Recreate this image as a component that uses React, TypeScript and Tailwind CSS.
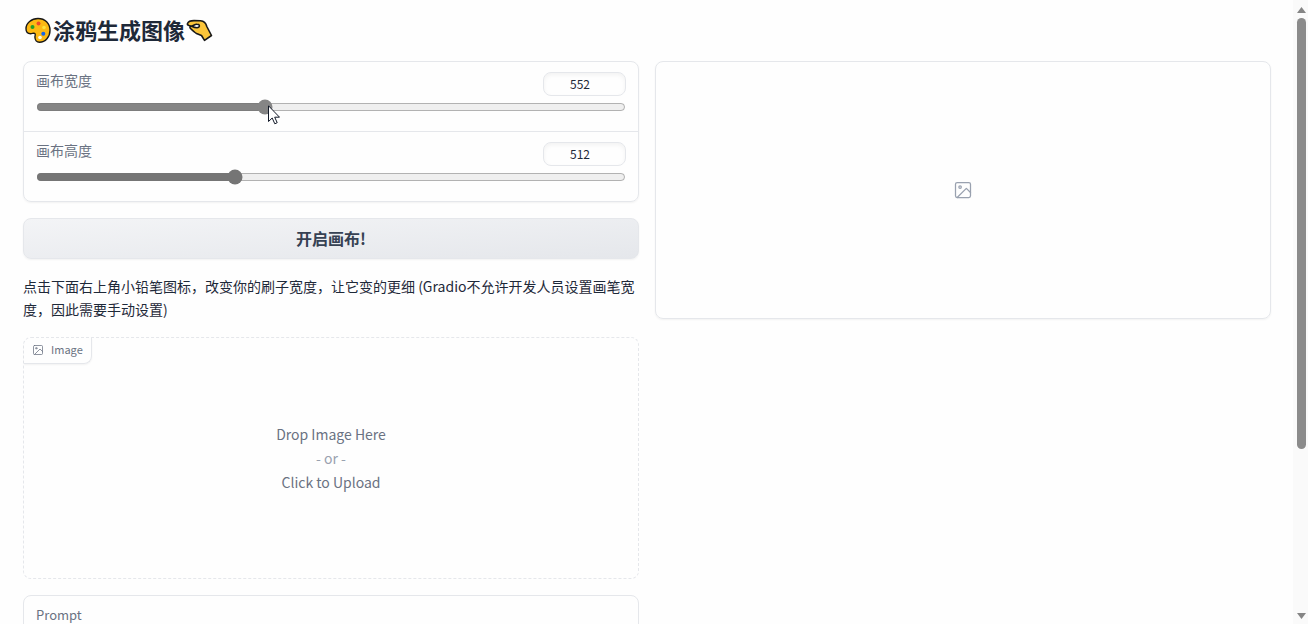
import React, { useState } from 'react'

const MIN_SIZE = 256
const MAX_SIZE = 1024

function PaletteIcon() {
  return (
    <svg className="h-7 w-7 shrink-0" viewBox="0 0 28 28" aria-hidden="true">
      <path
        d="M14 2.500C7.500 2.500 2 7.100 2 12.700c0 3.400 2.200 5 4.600 5 1.700 0 2.700-.8 4-.3 1.500.6.300 2.100.300 3.600 0 2.900 1.800 5.300 4.600 5.300 5.900 0 10.500-5.300 10.500-12C26 7.300 21 2.500 14 2.500Z"
        fill="#fdb913"
        stroke="#181818"
        strokeWidth="1.400"
      />
      <circle cx="14.500" cy="7.500" r="2" fill="#ee4b2b" />
      <circle cx="8.500" cy="11" r="2" fill="#23a026" />
      <circle cx="20" cy="11.500" r="1.800" fill="#fde23c" />
      <circle cx="19.300" cy="17.800" r="2" fill="#1764e8" />
      <circle cx="16" cy="21.500" r="1.800" fill="#fffbe8" />
    </svg>
  )
}

function PinchIcon() {
  return (
    <svg className="h-7 w-7 shrink-0" viewBox="0 0 28 28" aria-hidden="true">
      <path
        d="M1.500 7.500C2.500 5 5 4.600 8 4.600L14.500 4.700C18 5 20 7.300 20.800 10.500L25.500 19.500 18.500 24.300 15.500 19.500 10.500 17.500C8.500 16.500 6.500 14.500 4.300 12.300 3.500 11.300 4 10.400 5.500 10.300L3 9.600C1.800 9.200 1.200 8.400 1.500 7.500Z"
        fill="#fbc53a"
        stroke="#181818"
        strokeWidth="1.600"
        strokeLinejoin="round"
      />
      <path d="M5.500 10.200C7.500 10 8.500 8 11 8.200 13.500 8.200 14 9.800 12.800 11.200 11.500 12.200 8.500 11.500 5.500 10.200Z" fill="#fefefe" stroke="#181818" strokeWidth="1.500" strokeLinejoin="round" />
    </svg>
  )
}

function ImageIcon({ className }: { className: string }) {
  return (
    <svg className={className} viewBox="0 0 24 24" fill="none" stroke="currentColor" strokeWidth="1.500" strokeLinecap="round" strokeLinejoin="round" aria-hidden="true">
      <rect x="3" y="3" width="18" height="18" rx="2" />
      <circle cx="8.500" cy="8.500" r="1.500" />
      <path d="m21 15-5-5L5 21" />
    </svg>
  )
}

function Pointer() {
  return (
    <svg className="pointer-events-none absolute top-11 left-[245px] h-5 w-3" viewBox="0 0 12 20" aria-hidden="true">
      <path d="M.5.8V16.500L4.200 13 6.800 18.800 9.200 17.700 6.700 12.200H11.500Z" fill="#fff" stroke="#111827" strokeLinejoin="round" />
    </svg>
  )
}

function SizeSlider({ id, label, initial, accent }: { id: string; label: string; initial: number; accent: string }) {
  const [value, setValue] = useState(initial)

  return (
    <div className="px-3 pt-[10px] pb-4">
      <div className="flex h-6 justify-between">
        <label htmlFor={id} className="text-sm leading-4 text-gray-500">
          {label}
        </label>
        <input
          type="number"
          aria-label={label}
          min={MIN_SIZE}
          max={MAX_SIZE}
          value={value}
          onChange={(e) => setValue(Number(e.target.value))}
          className="h-6 w-[83px] rounded-lg border border-gray-200 pr-1 pb-[2px] pl-[10px] text-center text-xs text-gray-800 shadow-[inset_0_2px_4px_rgba(0,0,0,0.05)]"
        />
      </div>
      <input
        id={id}
        type="range"
        min={MIN_SIZE}
        max={MAX_SIZE}
        value={value}
        onChange={(e) => setValue(Number(e.target.value))}
        className={`mt-[3px] block h-4 w-full ${accent}`}
      />
    </div>
  )
}

function Scrollbar() {
  return (
    <div className="flex w-[15px] shrink-0 flex-col items-center bg-[#fafafa] pt-[5px] pb-[3px] pl-[2px]" aria-hidden="true">
      <svg className="my-[2px] h-[6px] w-[9px]" viewBox="0 0 9 6">
        <path d="M0 6 4.500 0 9 6Z" fill="#858585" />
      </svg>
      <div className="flex w-full flex-1 flex-col items-center py-[3px]">
        <div className="h-[73%] w-[9px] rounded-full bg-[#8b8b8b]" />
      </div>
      <svg className="my-[2px] h-[6px] w-[9px]" viewBox="0 0 9 6">
        <path d="M0 0H9L4.500 6Z" fill="#858585" />
      </svg>
    </div>
  )
}

export default function App() {
  const [prompt, setPrompt] = useState('')

  return (
    <div className="flex h-screen overflow-hidden bg-[#fefefe] font-['Noto_Sans_CJK_SC','Noto_Sans',sans-serif] text-gray-800">
      <main className="min-w-0 flex-1 overflow-hidden pr-[22px] pl-[23px]">
        <h1 className="mt-4 flex h-7 items-center gap-px pl-px text-[22px] leading-7 font-bold">
          <PaletteIcon />
          <span className="pb-[2px]">涂鸦生成图像</span>
          <PinchIcon />
        </h1>

        <div className="mt-[17px] grid grid-cols-2 items-start gap-4">
          <div className="flex flex-col gap-4">
            <div className="relative">
              <div className="divide-y divide-gray-200 rounded-lg border border-gray-200 shadow-[0_1px_2px_rgba(0,0,0,0.05)]">
                <SizeSlider id="canvas-width" label="画布宽度" initial={552} accent="accent-[#858585]" />
                <SizeSlider id="canvas-height" label="画布高度" initial={512} accent="accent-[#757575]" />
              </div>
              <Pointer />
            </div>

            <button
              type="button"
              className="h-[41px] rounded-lg border border-gray-200 bg-linear-to-br from-gray-100 to-gray-200 pb-px text-base leading-6 font-semibold text-gray-700 shadow-[0_1px_2px_rgba(0,0,0,0.05)]"
            >
              开启画布!
            </button>

            <p className="text-sm leading-[23px]">
              点击下面右上角小铅笔图标，改变你的刷子宽度，让它变的更细 (Gradio不允许开发人员设置画笔宽度，因此需要手动设置)
            </p>

            <div className="relative rounded-lg border border-dashed border-gray-200">
              <div className="absolute top-0 left-0 flex h-[26px] items-center rounded-tl-lg rounded-br-lg border-r border-b border-gray-200 px-2 pb-[2px] text-[11px] text-gray-500 shadow-[0_1px_2px_rgba(0,0,0,0.05)]">
                <ImageIcon className="mr-[7px] h-3 w-3 text-gray-500" />
                Image
              </div>
              <button type="button" className="flex h-[240px] w-full flex-col items-center justify-center text-sm leading-6 text-gray-500">
                <span>Drop Image Here</span>
                <span className="text-gray-400">- or -</span>
                <span>Click to Upload</span>
              </button>
            </div>

            <div className="rounded-lg border border-gray-200 px-3 py-[11px]">
              <label htmlFor="prompt" className="block text-[13px] leading-4 text-gray-500">
                Prompt
              </label>
              <input
                id="prompt"
                type="text"
                value={prompt}
                onChange={(e) => setPrompt(e.target.value)}
                className="mt-2 h-10 w-full rounded-lg border border-gray-200 px-3 text-sm"
              />
            </div>
          </div>

          <div className="flex h-[258px] items-center justify-center rounded-lg border border-gray-200 shadow-[0_1px_2px_rgba(0,0,0,0.05)]">
            <ImageIcon className="h-5 w-5 text-gray-400" />
          </div>
        </div>
      </main>
      <Scrollbar />
    </div>
  )
}
